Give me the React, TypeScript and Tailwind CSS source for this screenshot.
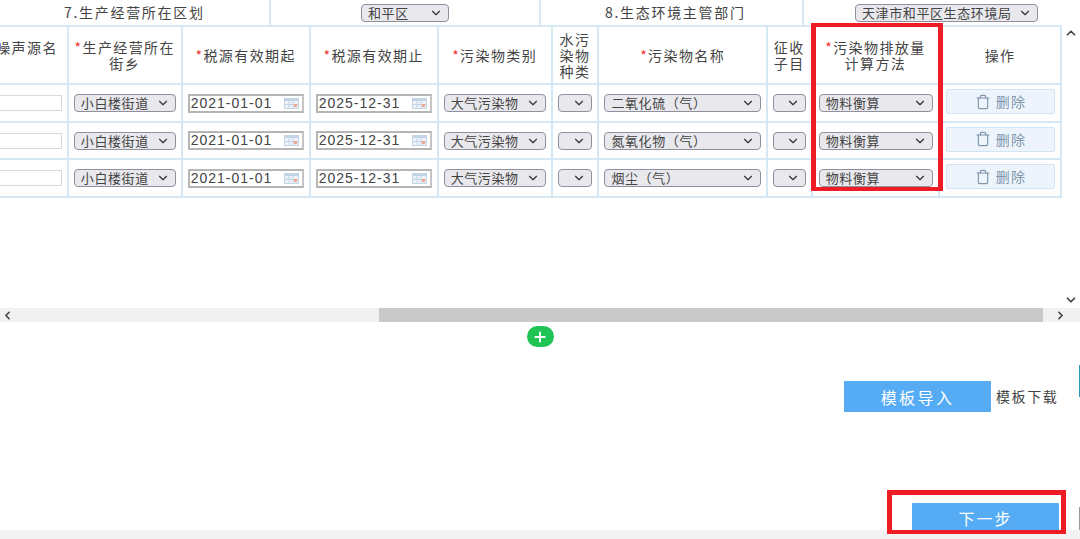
import { ChevronDown, ChevronLeft, ChevronRight, ChevronUp, Plus, Trash } from "lucide-react";

const rows = [
  { name: "二氧化硫（气）", h: "h-[38px]" },
  { name: "氮氧化物（气）", h: "h-[37px]" },
  { name: "烟尘（气）", h: "h-[38px]" },
];

const Select = ({ text, className }: { text?: string; className?: string }) => (
  <div className={`flex h-[18px] items-center justify-between rounded-[4px] border border-[#8f8f9d] bg-[#e9e9ed] pl-[6px] pr-[5px] text-[13px] tracking-[0.6px] text-[#444] ${className}`}>
    <span className="whitespace-nowrap">{text}</span>
    <ChevronDown size={14} strokeWidth={2} className="shrink-0 text-[#333]" />
  </div>
);

const DateInput = ({ value }: { value: string }) => (
  <div className="flex h-[19px] w-[116px] items-center justify-between border-2 border-[#b5b5b5] border-r-[#c4c4c4] bg-white pl-[1px] pr-[3px] font-['Liberation_Sans'] text-[14px] tracking-[1px] text-[#444]">
    <span>{value}</span>
    <svg width="15" height="11" viewBox="0 0 15 11">
      <rect width="15" height="11" fill="#c3d4e7" />
      <rect x="1" y="3" width="13" height="7" fill="#eef3f9" />
      <path d="M5 3v7M9 3v7M1 6.5h13" stroke="#c3d4e7" />
      <rect x="10" y="6" width="3" height="3" fill="#eea78c" />
    </svg>
  </div>
);

const Head = ({ children, star }: { children: React.ReactNode; star?: boolean }) => (
  <th className="border-2 border-[#d6e8f4] px-[2px] text-center text-[14px] font-normal leading-[16px] tracking-[1.4px] text-[#444]">
    {star && <span className="text-[#e33]">*</span>}
    {children}
  </th>
);

const Cell = ({ children }: { children?: React.ReactNode }) => (
  <td className="border-2 border-[#d6e8f4] px-[5px]">{children}</td>
);

export default function App() {
  return (
    <div className="relative flex h-[539px] w-[1080px] flex-col overflow-hidden bg-white font-['Noto_Sans_CJK_SC',sans-serif]">
      <div className="flex h-[25px] shrink-0 items-center text-[14px] tracking-[1.7px] text-[#444]">
        <div className="w-[269px] pl-[64px]">7.生产经营所在区划</div>
        <div className="flex h-full w-[272px] items-center border-x-2 border-[#d6e8f4] pl-[90px]">
          <Select text="和平区" className="w-[88px]" />
        </div>
        <div className="w-[261px] pl-[64px]">8.生态环境主管部门</div>
        <div className="flex h-full flex-1 items-center border-l-2 border-[#d6e8f4] pl-[51px]">
          <Select text="天津市和平区生态环境局" className="w-[183px]" />
        </div>
      </div>

      <div className="flex h-[283px] shrink-0 overflow-hidden">
        <div className="w-[1062px] overflow-hidden">
          <table className="ml-[-62px] table-fixed border-collapse">
            <colgroup>
              <col className="w-[129px]" />
              <col className="w-[114px]" />
              <col className="w-[128px]" />
              <col className="w-[128px]" />
              <col className="w-[114px]" />
              <col className="w-[47px]" />
              <col className="w-[169px]" />
              <col className="w-[45px]" />
              <col className="w-[128px]" />
              <col className="w-[123px]" />
            </colgroup>
            <thead>
              <tr className="h-[58px]">
                <th className="whitespace-nowrap border-2 border-[#d6e8f4] pb-[16px] pr-[9px] text-right text-[14px] font-normal tracking-[1.4px] text-[#444]">噪声源名</th>
                <Head star>生产经营所在<br />街乡</Head>
                <Head star>税源有效期起</Head>
                <Head star>税源有效期止</Head>
                <Head star>污染物类别</Head>
                <Head>水污<br />染物<br />种类</Head>
                <Head star>污染物名称</Head>
                <Head>征收<br />子目</Head>
                <Head star>污染物排放量<br />计算方法</Head>
                <Head>操作</Head>
              </tr>
            </thead>
            <tbody>
              {rows.map((row) => (
                <tr key={row.name} className={row.h}>
                  <td className="border-2 border-[#d6e8f4] pr-[5px]">
                    <div className="ml-auto h-[16px] w-[110px] border border-[#d9d9d9] bg-white" />
                  </td>
                  <Cell><Select text="小白楼街道" /></Cell>
                  <Cell><DateInput value="2021-01-01" /></Cell>
                  <Cell><DateInput value="2025-12-31" /></Cell>
                  <Cell><Select text="大气污染物" /></Cell>
                  <Cell><Select /></Cell>
                  <Cell><Select text={row.name} /></Cell>
                  <Cell><Select /></Cell>
                  <Cell><Select text="物料衡算" className="ml-[1px]" /></Cell>
                  <Cell>
                    <div className="mb-[3px] ml-[1px] flex h-[25px] items-center justify-center gap-[5px] rounded-[2px] border border-[#d0e4f4] bg-[#edf4fb] text-[14px] tracking-[1.2px] text-[#7f96ad]">
                      <Trash size={16} strokeWidth={1.75} />
                      删除
                    </div>
                  </Cell>
                </tr>
              ))}
            </tbody>
          </table>
        </div>
        <div className="flex w-[18px] flex-col items-center justify-between text-[#444]">
          <ChevronUp size={14} strokeWidth={3} className="mt-[1px]" />
          <ChevronDown size={14} strokeWidth={3} className="mb-[1px]" />
        </div>
      </div>

      <div className="flex h-[14px] shrink-0 items-center bg-[#f1f1f1] text-[#444]">
        <div className="flex w-[379px] items-center pl-[1px]"><ChevronLeft size={13} strokeWidth={3} /></div>
        <div className="h-full w-[664px] bg-[#c9c9c9]" />
        <div className="flex flex-1 justify-center pr-[2px]"><ChevronRight size={13} strokeWidth={3} /></div>
      </div>

      <div className="mt-[4px] flex justify-center">
        <div className="flex h-[21px] w-[27px] items-center justify-center rounded-full bg-[#1fc455] text-white">
          <Plus size={16} strokeWidth={2.75} />
        </div>
      </div>

      <div className="mt-[34px] flex items-center pl-[844px]">
        <div className="flex h-[31px] w-[147px] items-center justify-center rounded-[1px] bg-[#55acf5] text-[16px] tracking-[2.4px] text-white">模板导入</div>
        <div className="ml-[5px] whitespace-nowrap text-[14px] tracking-[1.6px] text-[#444]">模板下载</div>
      </div>

      <div className="mt-[91px] flex h-[27px] shrink-0 justify-end pr-[21px]">
        <div className="flex w-[147px] items-center justify-center rounded-t-[1px] bg-[#55acf5] pt-[3px] text-[16px] tracking-[2px] text-white">下一步</div>
      </div>
      <div className="flex-1 bg-[#f3f3f3]" />

      {/* red annotation boxes and the stray edge marks of the capture */}
      <div className="absolute left-[811px] top-[23px] h-[168px] w-[132px] border-x-[5px] border-y-[4px] border-[#ee1c25]" />
      <div className="absolute left-[887px] top-[490px] h-[44px] w-[179px] border-x-[5px] border-b-[4px] border-t-[5px] border-[#ee1c25]" />
      <div className="absolute right-0 top-[365px] h-[32px] w-[1px] bg-[#2a9db8]" />
      <div className="absolute right-0 top-[507px] h-[23px] w-[1px] bg-[#999]" />
    </div>
  );
}
